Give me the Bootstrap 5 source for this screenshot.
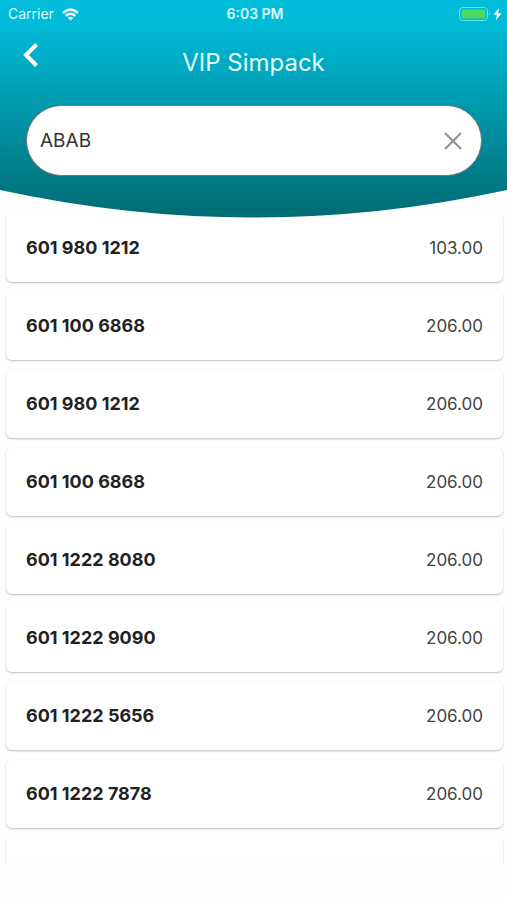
<!DOCTYPE html>
<html lang="en">
<head>
<meta charset="utf-8">
<meta name="viewport" content="width=device-width, initial-scale=1">
<title>VIP Simpack</title>
<link rel="stylesheet" href="https://cdn.jsdelivr.net/npm/bootstrap@5.3.0/dist/css/bootstrap.min.css">
<style>
body { font-family: Inter, "Liberation Sans", sans-serif; color: #222; background: #fefefe; }
.hero { z-index: 1; padding-bottom: 42px; }
.hero-bg { z-index: -1; }
.status { height: 28px; padding: 0 5px 0 8px; color: #d8fbff; font-size: 14px; line-height: 28px; }
.status-time { font-weight: 600; }
.title-bar { height: 77px; }
.title-bar h1 { font-size: 24px; line-height: 32px; padding-top: 19px; color: #e2fcff; }
.back { left: 17px; top: 10px; width: 28px; height: 34px; }
.search { margin: 0 25px 0 26px; height: 71px; border: 1px solid #777; padding: 0 18px 0 13px; }
.search-input { font-size: 19px; color: #333; outline: 0; min-width: 0; height: 40px; }
.clear { width: 20px; height: 20px; }
.numbers { margin-top: -4px; margin-bottom: 37px; padding: 0 4px 0 6px; min-height: 0; scrollbar-width: none; }
.numbers::-webkit-scrollbar { display: none; }
.sim { height: 68px; padding: 0 20px; margin-bottom: 10px; border-radius: 6px; background: #fff; box-shadow: 0 1px 2px rgba(0,0,0,.26); line-height: 28px; }
.sim-number { font-size: 18px; font-weight: 700; }
.sim-price { font-size: 17px; color: #444; }
</style>
<script src="https://cdn.jsdelivr.net/npm/bootstrap@5.3.0/dist/js/bootstrap.bundle.min.js"></script>
</head>
<body>
<div class="d-flex flex-column vh-100">
  <header class="hero position-relative flex-shrink-0">
    <svg class="hero-bg position-absolute top-0 start-0 w-100 h-100" viewBox="0 0 507 218" preserveAspectRatio="none" aria-hidden="true">
      <defs><linearGradient id="sea" x1="0" y1="0" x2="0" y2="1"><stop offset=".1" stop-color="#00bcd9"/><stop offset="1" stop-color="#006b73"/></linearGradient></defs>
      <path d="M0 0H507V190Q253.500 245 0 190Z" fill="url(#sea)"/>
    </svg>
    <div class="status row gx-0 align-items-center">
      <div class="col d-flex align-items-center gap-2">
        <span>Carrier</span>
        <svg width="17" height="13" viewBox="0 0 17 13" fill="none" stroke="#fff" stroke-width="2.400" aria-label="Wi-Fi" role="img"><path d="M1 4.800Q8.500-1.800 16 4.800M3.700 7.900Q8.500 3.700 13.300 7.900"/><path d="M8.500 12.500L5.900 9.900Q8.500 7.700 11.100 9.900Z" fill="#fff" stroke="none"/></svg>
      </div>
      <div class="col-auto status-time">6:03 PM</div>
      <div class="col d-flex justify-content-end align-items-center">
        <svg width="43" height="14" viewBox="0 0 43 14" aria-label="Battery charging" role="img"><rect x=".5" y=".5" width="28" height="13" rx="3.500" fill="none" stroke="#6bdcec"/><rect x="2.500" y="2.500" width="24" height="9" rx="1.500" fill="#4cd95f"/><path d="M30 5Q32 7 30 9Z" fill="#6bdcec"/><path d="M40 1L34.500 7.800H38L36.700 13.500L42.500 6.300H39Z" fill="#fff"/></svg>
      </div>
    </div>
    <div class="title-bar position-relative text-center">
      <button type="button" class="back btn p-0 border-0 position-absolute d-flex align-items-center justify-content-center" aria-label="Back">
        <svg width="16" height="26" viewBox="0 0 16 26" fill="none" stroke="#fff" stroke-width="4"><path d="M13.500 2.500L3 13L13.500 23.500"/></svg>
      </button>
      <h1 class="fw-normal m-0">VIP Simpack</h1>
    </div>
    <form class="search d-flex align-items-center bg-white rounded-pill">
      <input class="search-input flex-fill border-0 p-0 bg-transparent" type="text" value="ABAB" aria-label="Number pattern">
      <button type="reset" class="clear btn p-0 border-0 d-flex align-items-center justify-content-center" aria-label="Clear">
        <svg width="18" height="18" viewBox="0 0 18 18" stroke="#929292" stroke-width="2.200"><path d="M1 1L17 17M17 1L1 17"/></svg>
      </button>
    </form>
  </header>
  <main class="numbers flex-fill overflow-auto">
    <ul class="list-unstyled m-0">
      <li class="sim d-flex align-items-center justify-content-between"><span class="sim-number">601 980 1212</span><span class="sim-price">103.00</span></li>
      <li class="sim d-flex align-items-center justify-content-between"><span class="sim-number">601 100 6868</span><span class="sim-price">206.00</span></li>
      <li class="sim d-flex align-items-center justify-content-between"><span class="sim-number">601 980 1212</span><span class="sim-price">206.00</span></li>
      <li class="sim d-flex align-items-center justify-content-between"><span class="sim-number">601 100 6868</span><span class="sim-price">206.00</span></li>
      <li class="sim d-flex align-items-center justify-content-between"><span class="sim-number">601 1222 8080</span><span class="sim-price">206.00</span></li>
      <li class="sim d-flex align-items-center justify-content-between"><span class="sim-number">601 1222 9090</span><span class="sim-price">206.00</span></li>
      <li class="sim d-flex align-items-center justify-content-between"><span class="sim-number">601 1222 5656</span><span class="sim-price">206.00</span></li>
      <li class="sim d-flex align-items-center justify-content-between"><span class="sim-number">601 1222 7878</span><span class="sim-price">206.00</span></li>
      <li class="sim"></li>
    </ul>
  </main>
</div>
</body>
</html>
